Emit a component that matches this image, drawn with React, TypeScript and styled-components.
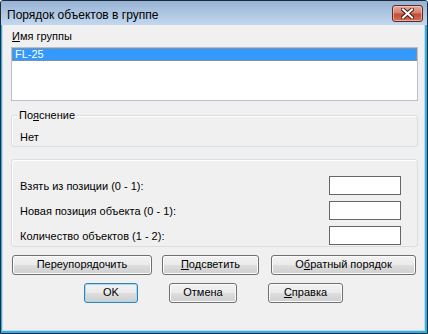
import React from "react";
import styled, { createGlobalStyle } from "styled-components";

const GlobalStyle = createGlobalStyle`
  html, body {
    margin: 0;
    padding: 0;
    background: #ffffff;
  }
  body {
    font-family: "Liberation Sans", Arial, sans-serif;
    font-size: 11px;
    color: #000;
  }
`;

const Window = styled.div`
  width: 428px;
  height: 334px;
  box-sizing: border-box;
  border: 1px solid #1d2b3a;
  border-radius: 3px 3px 0 0;
  background: #2bb2e3;
  display: flex;
  flex-direction: column;
  overflow: hidden;
`;

const TitleBar = styled.div`
  height: 24px;
  flex: none;
  display: flex;
  align-items: flex-start;
  justify-content: space-between;
  padding: 0 4px 0 6px;
  background: linear-gradient(#97b3d4, #c3d8ee);
`;

const Title = styled.span`
  font-size: 12px;
  line-height: 14px;
  margin-top: 7px;
`;

const CloseButton = styled.div`
  width: 31px;
  height: 17px;
  margin-top: 4px;
  box-sizing: border-box;
  border: 1px solid #5b2a25;
  border-radius: 3px;
  background: linear-gradient(#e9a99c 0%, #d4806d 45%, #c24a33 55%, #d1725a 100%);
  box-shadow: inset 0 0 0 1px rgba(255, 220, 210, 0.55);
  display: flex;
  align-items: center;
  justify-content: center;
`;

const Client = styled.div`
  flex: 1;
  margin: 0 2px 2px 1px;
  box-sizing: border-box;
  background: #f0f0f0;
  border: 1px solid #c4d8ee;
  border-top: none;
  padding: 5px 6px 0 8px;
  display: flex;
  flex-direction: column;
`;

const FieldLabel = styled.div`
  line-height: 13px;
  padding-left: 1px;
`;

const Key = styled.u`
  text-decoration: underline;
  text-underline-offset: 1px;
`;

const ListBox = styled.div`
  height: 54px;
  margin-top: 4px;
  box-sizing: border-box;
  border: 1px solid #b6c0cf;
  background: #ffffff;
`;

const ListItem = styled.div<{ $selected?: boolean }>`
  height: 13px;
  box-sizing: border-box;
  line-height: 11px;
  padding-left: 2px;
  color: ${({ $selected }) => ($selected ? "#ffffff" : "#000")};
  background: ${({ $selected }) => ($selected ? "#3399ff" : "transparent")};
  border: 1px dotted ${({ $selected }) => ($selected ? "#c88a4a" : "transparent")};
`;

const GroupBox = styled.div<{ $height: number; $top: number }>`
  position: relative;
  height: ${({ $height }) => $height}px;
  margin-top: ${({ $top }) => $top}px;
  box-sizing: border-box;
  border: 1px solid #d5dfe5;
  border-radius: 3px;
  box-shadow: inset 1px 1px 0 #ffffff;
`;

const Legend = styled.span`
  position: absolute;
  top: -7px;
  left: 6px;
  padding: 0 2px 0 1px;
  line-height: 13px;
  background: #f0f0f0;
`;

const NoteText = styled.div`
  padding: 15px 0 0 8px;
  line-height: 13px;
`;

const Rows = styled.div`
  display: flex;
  flex-direction: column;
  gap: 6px;
  padding: 16px 16px 0 8px;
`;

const Row = styled.div`
  height: 19px;
  display: flex;
  align-items: center;
  justify-content: space-between;
`;

const Input = styled.div`
  width: 72px;
  height: 19px;
  box-sizing: border-box;
  border: 1px solid #666666;
  background: #ffffff;
`;

const ButtonRow = styled.div<{ $top: number; $left: number }>`
  display: flex;
  margin-top: ${({ $top }) => $top}px;
  padding-left: ${({ $left }) => $left}px;
`;

const Button = styled.div<{ $width: number; $before?: number; $default?: boolean }>`
  width: ${({ $width }) => $width}px;
  margin-left: ${({ $before }) => $before ?? 0}px;
  height: 20px;
  box-sizing: border-box;
  border: 1px solid ${({ $default }) => ($default ? "#3c7fb1" : "#707070")};
  border-radius: 3px;
  background: linear-gradient(#f2f2f2 0%, #ebebeb 48%, #dddddd 52%, #cfcfcf 100%);
  box-shadow: inset 0 0 0 1px ${({ $default }) => ($default ? "#9fdcf7" : "#fbfbfb")};
  display: flex;
  align-items: center;
  justify-content: center;
  line-height: 13px;
  padding-bottom: 1px;
`;

const CloseIcon = () => (
  <svg width="13" height="11" viewBox="0 0 13 11">
    <path
      d="M2 1.5 L11 9.5 M11 1.5 L2 9.5"
      stroke="#4a1d18"
      strokeWidth="4"
      strokeLinecap="square"
    />
    <path
      d="M2 1.5 L11 9.5 M11 1.5 L2 9.5"
      stroke="#ffffff"
      strokeWidth="2"
      strokeLinecap="square"
    />
  </svg>
);

const rows = [
  "Взять из позиции (0 - 1):",
  "Новая позиция объекта (0 - 1):",
  "Количество объектов (1 - 2):",
];

export default function App() {
  return (
    <>
      <GlobalStyle />
      <Window>
        <TitleBar>
          <Title>Порядок объектов в группе</Title>
          <CloseButton>
            <CloseIcon />
          </CloseButton>
        </TitleBar>
        <Client>
          <FieldLabel>
            <Key>И</Key>мя группы
          </FieldLabel>
          <ListBox>
            <ListItem $selected>FL-25</ListItem>
          </ListBox>

          <GroupBox $height={32} $top={14}>
            <Legend>
              По<Key>я</Key>снение
            </Legend>
            <NoteText>Нет</NoteText>
          </GroupBox>

          <GroupBox $height={88} $top={12}>
            <Rows>
              {rows.map((label) => (
                <Row key={label}>
                  <span>{label}</span>
                  <Input />
                </Row>
              ))}
            </Rows>
          </GroupBox>

          <ButtonRow $top={8} $left={1}>
            <Button $width={140}>Переупорядочить</Button>
            <Button $width={97} $before={10}>
              <Key>П</Key>одсветить
            </Button>
            <Button $width={145} $before={12}>
              О<Key>б</Key>ратный порядок
            </Button>
          </ButtonRow>
          <ButtonRow $top={8} $left={73}>
            <Button $width={54} $default>
              OK
            </Button>
            <Button $width={68} $before={31}>
              Отмена
            </Button>
            <Button $width={75} $before={31}>
              <Key>С</Key>правка
            </Button>
          </ButtonRow>
        </Client>
      </Window>
    </>
  );
}
